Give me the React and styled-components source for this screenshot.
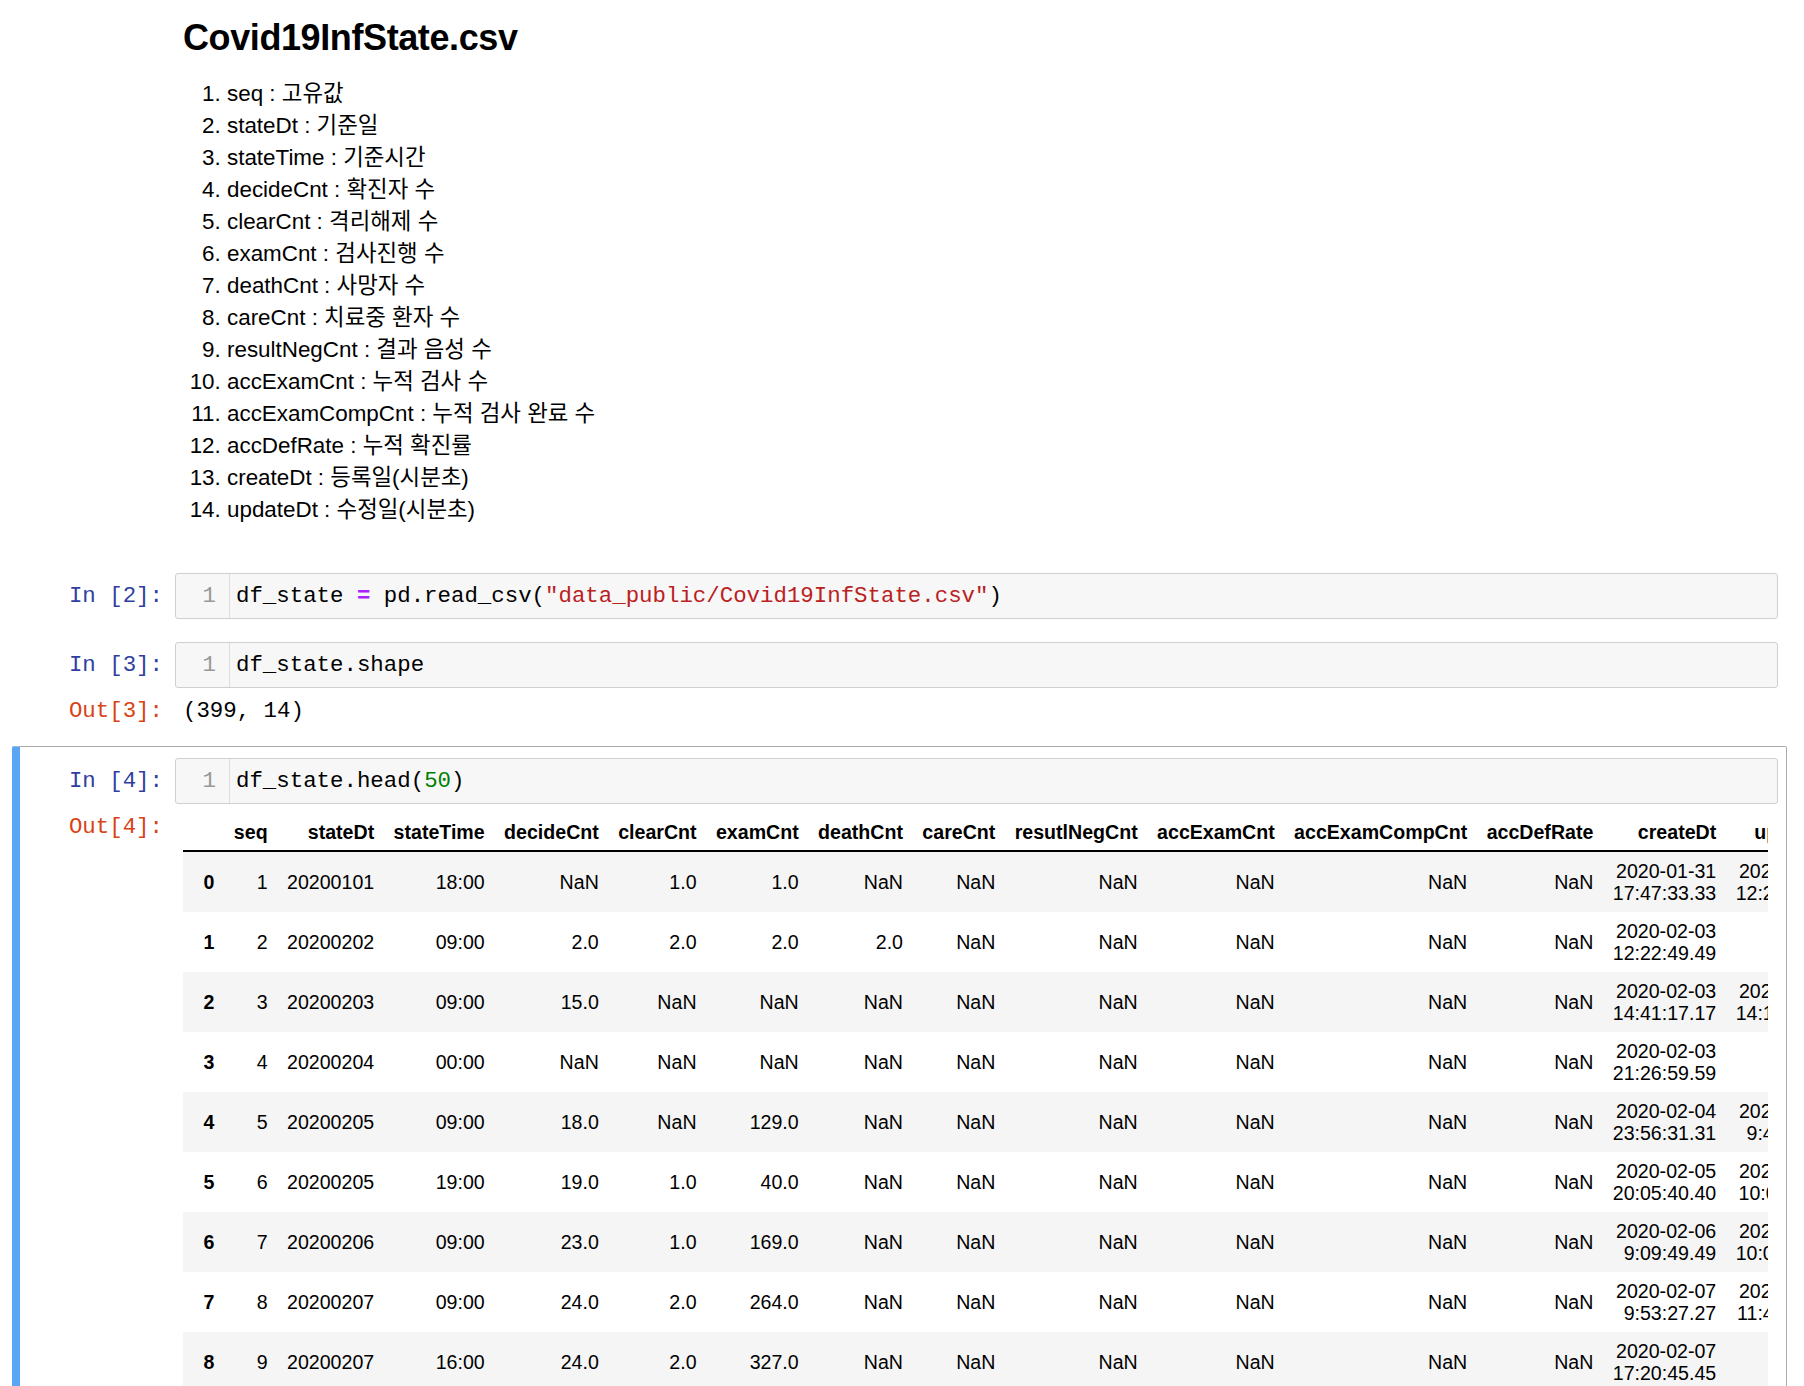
import styled, { createGlobalStyle } from "styled-components";

const SANS = `"Liberation Sans", "Noto Sans CJK KR", sans-serif`;
const MONO = `"Liberation Mono", "DejaVu Sans Mono", monospace`;

const GlobalStyle = createGlobalStyle`
  body {
    margin: 0;
    background: #ffffff;
    color: #000000;
    font-family: ${SANS};
  }
`;

const fields = [
  ["seq", "고유값"],
  ["stateDt", "기준일"],
  ["stateTime", "기준시간"],
  ["decideCnt", "확진자 수"],
  ["clearCnt", "격리해제 수"],
  ["examCnt", "검사진행 수"],
  ["deathCnt", "사망자 수"],
  ["careCnt", "치료중 환자 수"],
  ["resultNegCnt", "결과 음성 수"],
  ["accExamCnt", "누적 검사 수"],
  ["accExamCompCnt", "누적 검사 완료 수"],
  ["accDefRate", "누적 확진률"],
  ["createDt", "등록일(시분초)"],
  ["updateDt", "수정일(시분초)"],
];

const columns = [
  "seq",
  "stateDt",
  "stateTime",
  "decideCnt",
  "clearCnt",
  "examCnt",
  "deathCnt",
  "careCnt",
  "resutlNegCnt",
  "accExamCnt",
  "accExamCompCnt",
  "accDefRate",
  "createDt",
  "updateDt",
];

const N = "NaN";
const rows = [
  [1, "20200101", "18:00", N, "1.0", "1.0", N, N, N, N, N, N, "2020-01-31 17:47:33.33", "2020-02-03 12:23:41.41"],
  [2, "20200202", "09:00", "2.0", "2.0", "2.0", "2.0", N, N, N, N, N, "2020-02-03 12:22:49.49", N],
  [3, "20200203", "09:00", "15.0", N, N, N, N, N, N, N, N, "2020-02-03 14:41:17.17", "2020-02-04 14:12:36.36"],
  [4, "20200204", "00:00", N, N, N, N, N, N, N, N, N, "2020-02-03 21:26:59.59", N],
  [5, "20200205", "09:00", "18.0", N, "129.0", N, N, N, N, N, N, "2020-02-04 23:56:31.31", "2020-02-05 9:44:18.18"],
  [6, "20200205", "19:00", "19.0", "1.0", "40.0", N, N, N, N, N, N, "2020-02-05 20:05:40.40", "2020-02-06 10:02:11.11"],
  [7, "20200206", "09:00", "23.0", "1.0", "169.0", N, N, N, N, N, N, "2020-02-06 9:09:49.49", "2020-02-07 10:03:52.52"],
  [8, "20200207", "09:00", "24.0", "2.0", "264.0", N, N, N, N, N, N, "2020-02-07 9:53:27.27", "2020-02-08 11:40:25.25"],
  [9, "20200207", "16:00", "24.0", "2.0", "327.0", N, N, N, N, N, N, "2020-02-07 17:20:45.45", N],
  [10, "20200208", "09:00", "24.0", "2.0", "421.0", N, N, N, N, N, N, "2020-02-08 9:31:12.12", N],
  [11, "20200209", "09:00", "25.0", "3.0", "339.0", N, N, N, N, N, N, "2020-02-09 9:26:05.05", N],
];

const Notebook = styled.div`
  padding: 0 17px 40px 12px;
`;

const Cell = styled.div`
  border: 1px solid ${(p) => (p.$selected ? "#ababab" : "transparent")};
  border-left: 8px solid ${(p) => (p.$selected ? "#5aa6f2" : "transparent")};
  border-radius: 2px;
  padding: ${(p) => (p.$selected ? "11px" : "8px")} 8px 8px 1px;
  margin-bottom: 5px;
`;

const Row = styled.div`
  display: flex;
  align-items: flex-start;
`;

const Prompt = styled.div`
  width: 154px;
  flex-shrink: 0;
  box-sizing: border-box;
  padding: 9px 12px 0 0;
  text-align: right;
  font-family: ${MONO};
  font-size: 22.4px;
  line-height: 28px;
  color: ${(p) => (p.$out ? "#d84315" : "#303f9f")};
  white-space: nowrap;
`;

const CodeBox = styled.div`
  flex: 1;
  display: flex;
  border: 1px solid #cfcfcf;
  border-radius: 3px;
  background: #f7f7f7;
  font-family: ${MONO};
  font-size: 22.4px;
  line-height: 28px;
`;

const Gutter = styled.div`
  width: 54px;
  box-sizing: border-box;
  padding: 8px 13px 8px 0;
  border-right: 1px solid #dddddd;
  text-align: right;
  color: #999999;
`;

const Code = styled.pre`
  margin: 0;
  padding: 8px 6px;
  font: inherit;
  color: #000000;
  white-space: pre;
`;

const Op = styled.span`
  color: #aa22ff;
  font-weight: bold;
`;

const Str = styled.span`
  color: #ba2121;
`;

const Num = styled.span`
  color: #008000;
`;

const Output = styled.div`
  flex: 1;
  min-width: 0;
  margin-right: 10px;
  padding: 9px 0 7px 8px;
  overflow: hidden;
`;

const PlainOut = styled.pre`
  margin: 0;
  font-family: ${MONO};
  font-size: 22.4px;
  line-height: 28px;
  color: #000000;
`;

const Markdown = styled.div`
  flex: 1;
  padding: 0 8px;
`;

const Title = styled.h1`
  margin: 7px 0 0;
  font-family: ${SANS};
  font-size: 36px;
  line-height: 44px;
  font-weight: bold;
  letter-spacing: -0.4px;
`;

const FieldList = styled.ol`
  margin: 18px 0 24px;
  padding-left: 44px;
  font-size: 22.4px;
  line-height: 32px;
`;

const Table = styled.table`
  border-collapse: collapse;
  border-spacing: 0;
  font-family: ${SANS};
  font-size: 19.6px;
  color: #000000;

  thead th {
    padding: 8px 9.7px 7px;
    line-height: 22px;
    text-align: right;
    font-weight: bold;
    white-space: nowrap;
    border-bottom: 2px solid #000000;
  }

  tbody tr:nth-child(odd) {
    background: #f5f5f5;
  }

  tbody th,
  tbody td {
    padding: 8px 9.7px;
    line-height: 22px;
    text-align: right;
    vertical-align: middle;
  }

  tbody th {
    font-weight: bold;
  }
`;

export default function App() {
  return (
    <>
      <GlobalStyle />
      <Notebook>
        <Cell>
          <Row>
            <Prompt />
            <Markdown>
              <Title>Covid19InfState.csv</Title>
              <FieldList>
                {fields.map(([name, label]) => (
                  <li key={name}>
                    {name} : {label}
                  </li>
                ))}
              </FieldList>
            </Markdown>
          </Row>
        </Cell>

        <Cell>
          <Row>
            <Prompt>In [2]:</Prompt>
            <CodeBox>
              <Gutter>1</Gutter>
              <Code>
                df_state <Op>=</Op> pd.read_csv(
                <Str>"data_public/Covid19InfState.csv"</Str>)
              </Code>
            </CodeBox>
          </Row>
        </Cell>

        <Cell>
          <Row>
            <Prompt>In [3]:</Prompt>
            <CodeBox>
              <Gutter>1</Gutter>
              <Code>df_state.shape</Code>
            </CodeBox>
          </Row>
          <Row>
            <Prompt $out>Out[3]:</Prompt>
            <Output>
              <PlainOut>(399, 14)</PlainOut>
            </Output>
          </Row>
        </Cell>

        <Cell $selected>
          <Row>
            <Prompt>In [4]:</Prompt>
            <CodeBox>
              <Gutter>1</Gutter>
              <Code>
                df_state.head(<Num>50</Num>)
              </Code>
            </CodeBox>
          </Row>
          <Row>
            <Prompt $out>Out[4]:</Prompt>
            <Output>
              <Table>
                <thead>
                  <tr>
                    <th></th>
                    {columns.map((c) => (
                      <th key={c}>{c}</th>
                    ))}
                  </tr>
                </thead>
                <tbody>
                  {rows.map((r, i) => (
                    <tr key={i}>
                      <th>{i}</th>
                      {r.map((v, j) => (
                        <td key={j}>{v}</td>
                      ))}
                    </tr>
                  ))}
                </tbody>
              </Table>
            </Output>
          </Row>
        </Cell>
      </Notebook>
    </>
  );
}
